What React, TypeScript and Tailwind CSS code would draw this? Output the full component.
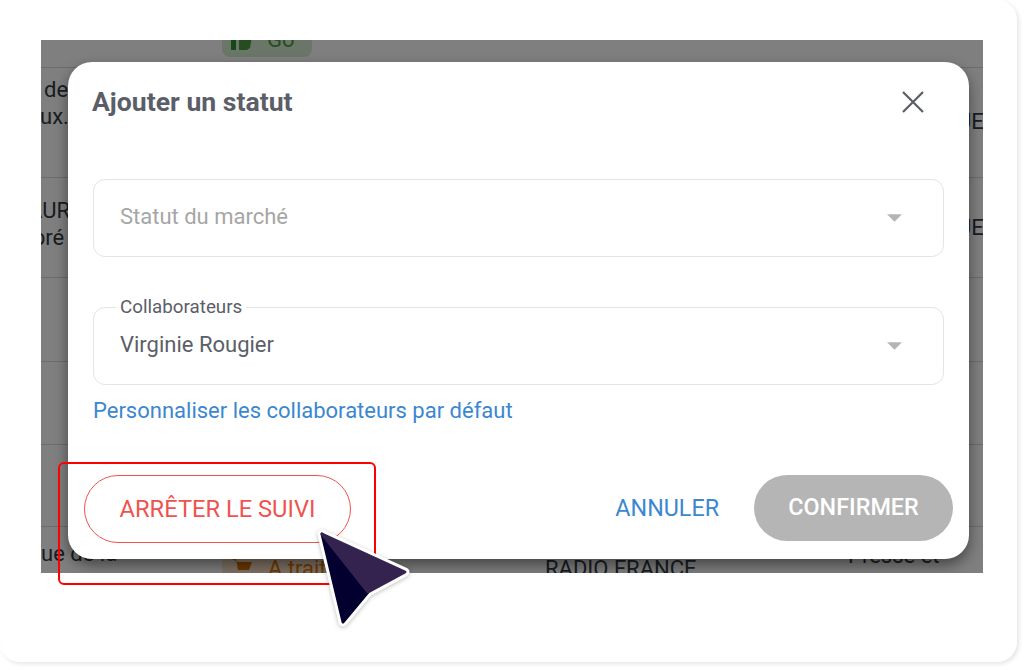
import React from "react";

function Row({ h, children }: { h: string; children?: React.ReactNode }) {
  return <div className={`${h} relative border-b border-[#d8d8d8] text-[22px] leading-[27px] text-[#333a44]`}>{children}</div>;
}

function Caret() {
  return (
    <svg width="15" height="8" viewBox="0 0 16 8" className="shrink-0">
      <path d="M0 0h16L8 8z" fill="#b5b5b5" />
    </svg>
  );
}

export default function App() {
  return (
    <div className="relative h-[670px] w-[1024px] overflow-hidden bg-white font-['Roboto',sans-serif]">
      {/* page card */}
      <div className="h-[662px] w-[1017px] rounded-[20px] bg-white pl-[41px] pt-10 shadow-[2px_2px_4px_rgba(0,0,0,0.1)]">
        {/* table behind the dialog */}
        <div className="relative h-[533px] w-[942px] overflow-hidden bg-white">
          <Row h="h-[28px]">
            <div className="flex">
              <div className="ml-[181px] flex h-[45px] w-[90px] -translate-y-[28px] items-end gap-[15px] rounded-lg bg-[#d4edcf] pb-[4px] pl-[9px] text-[#4d9a45]">
                <svg width="21" height="20" viewBox="0 0 21 20" className="mb-[3px]">
                  <rect x="0" y="4" width="5" height="16" fill="#2f8f2b" />
                  <path d="M8 6l5-6 2 1-1 5h7l-2 12-3 2H8z" fill="#4d9a45" />
                </svg>
                Go
              </div>
              <div className="ml-[536px] -translate-y-[23px]">Internet</div>
            </div>
          </Row>
          <Row h="h-[110px]">
            <div className="pl-[3px] pt-[8px]">de</div>
            <div className="-ml-px">ux.</div>
            <div className="absolute left-[916px] top-[40px]">UE</div>
          </Row>
          <Row h="h-[100px]">
            <div className="-ml-[13px] pt-[19px]">AUR</div>
            <div className="-ml-2">pré</div>
            <div className="absolute left-[916px] top-[36px]">UE</div>
          </Row>
          <Row h="h-[84px]" />
          <Row h="h-[83px]" />
          <Row h="h-[82px]" />
          <div className="flex items-start text-[22px] leading-[27px] text-[#333a44]">
            <div className="mt-[13px] w-[181px]">ue de la</div>
            <div className="mt-[18px] flex h-[60px] w-[130px] gap-[15px] rounded-t-lg bg-[#fde3c8] pl-[10px] pt-[10px] text-[#e57200]">
              <svg width="21" height="20" viewBox="0 0 21 20" className="mt-1">
                <path d="M0 0h4l2 11h11l3-8H6v0" fill="#d96f00" />
              </svg>
              À traiter
            </div>
            <div className="ml-[193px] mt-7 w-[303px]">RADIO FRANCE</div>
            <div className="mt-[15px]">Presse et</div>
          </div>

          <div className="absolute inset-0 bg-black/50" />

          {/* dialog */}
          <div className="absolute left-[27px] top-[22px] flex h-[497px] w-[901px] flex-col rounded-[24px] bg-white shadow-[0_6px_14px_rgba(0,0,0,0.45)]">
            <div className="flex h-20 items-center justify-between pl-6 pr-[45px]">
              <h2 className="text-[26.6px] font-bold text-[#5b5e68]">Ajouter un statut</h2>
              <svg width="22" height="22" viewBox="0 0 22 22" fill="none" stroke="#5b5e68" strokeWidth="2.2">
                <path d="M1 1l20 20M21 1L1 21" />
              </svg>
            </div>

            <div className="mx-[25px] mt-[37px] flex h-[78px] items-center justify-between rounded-xl border border-[#e4e4e4] pl-[26px] pr-[41px] text-[22px] text-[#a6a6a6]">
              <span className="mb-[3px]">Statut du marché</span>
              <Caret />
            </div>

            <div className="relative mx-[25px] mt-[50px] flex h-[78px] items-center justify-between rounded-xl border border-[#e4e4e4] pl-[26px] pr-[41px] text-[22px] text-[#5b5e68]">
              <span className="absolute -top-[11px] left-[22px] bg-white px-1 text-[18.8px] leading-[20px] text-[#5b5e68]">Collaborateurs</span>
              <span className="mb-[3px]">Virginie Rougier</span>
              <Caret />
            </div>

            <a className="ml-[25px] mt-[13px] text-[22px] leading-[26px] text-[#3b87d0]">Personnaliser les collaborateurs par défaut</a>

            <div className="mt-[51px] flex items-start justify-between pl-4 pr-4">
              <button className="flex h-[68px] w-[267px] items-center justify-center rounded-full border border-[#ef5350] pt-[2px] text-[23.7px] text-[#ef5350]">
                ARRÊTER LE SUIVI
              </button>
              <div className="flex items-center gap-[35px]">
                <button className="-ml-px text-[23.3px] text-[#3b87d0]">ANNULER</button>
                <button className="h-[66px] w-[199px] rounded-full bg-[#b5b5b5] text-[23.4px] font-medium text-white">
                  CONFIRMER
                </button>
              </div>
            </div>
          </div>
        </div>
      </div>

      {/* annotation */}
      <div className="absolute left-[58px] top-[462px] h-[123px] w-[318px] rounded-md border-2 border-[#ff0000]" />
      <svg className="absolute left-[310px] top-[520px]" width="110" height="115" viewBox="310 520 110 115">
        <path d="M322 534L405 572L368 592L343 622Z" fill="#fff" stroke="#fff" strokeWidth="9" strokeLinejoin="round" style={{ filter: "drop-shadow(0 1px 2px rgba(0,0,0,0.25))" }} />
        <path d="M322 534L368 592L343 622Z" fill="#03002f" stroke="#03002f" strokeWidth="3" strokeLinejoin="round" />
        <path d="M322 534L405 572L368 592Z" fill="#35234f" stroke="#35234f" strokeWidth="3" strokeLinejoin="round" />
      </svg>
    </div>
  );
}
